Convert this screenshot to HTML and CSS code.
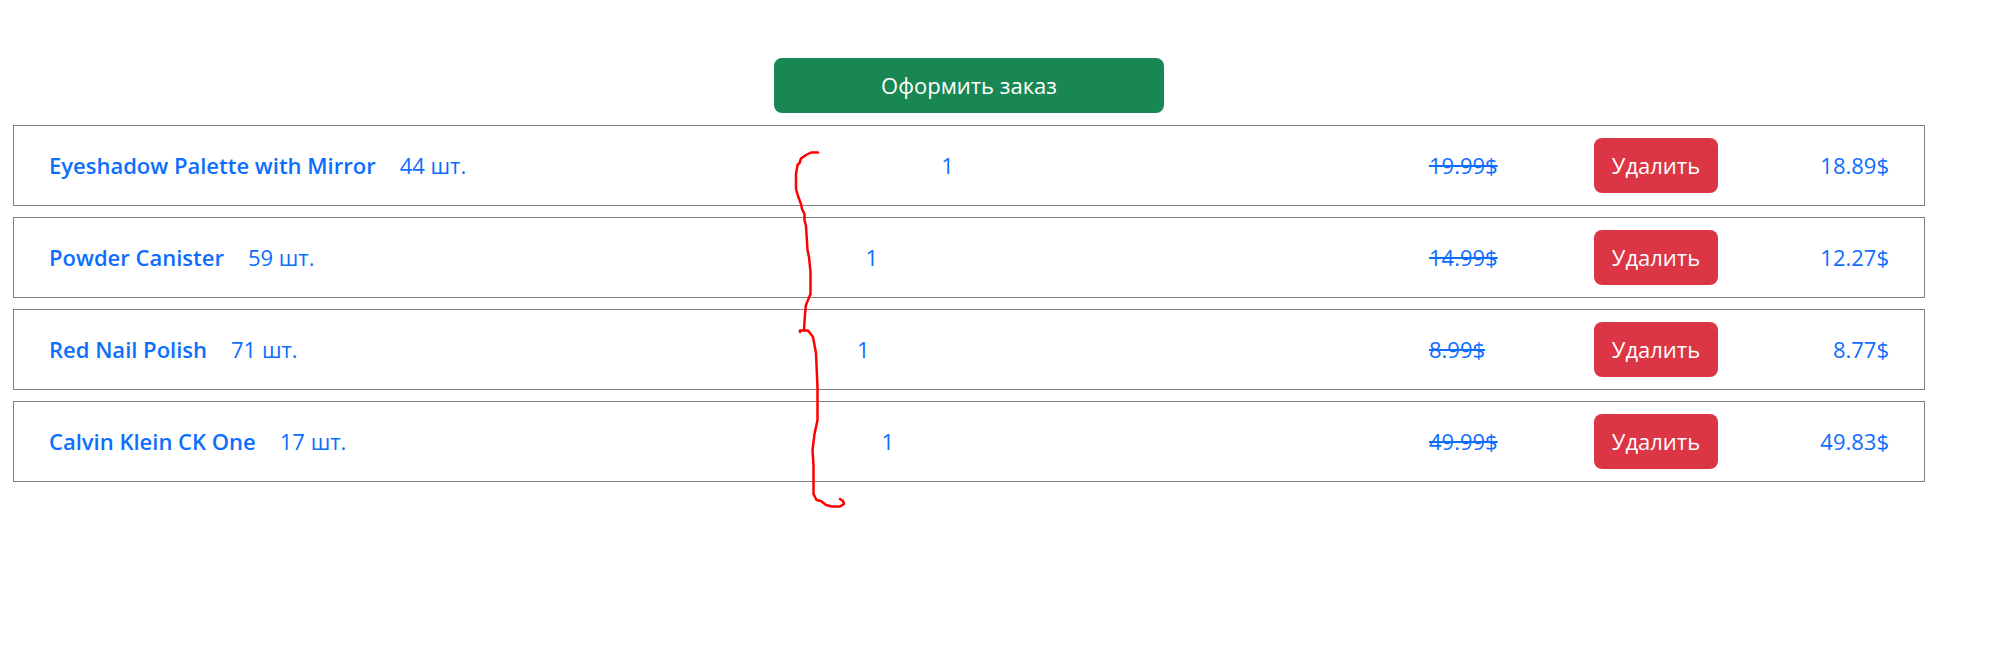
FILE: index.html
```html
<!DOCTYPE html>
<html lang="ru">
<head>
<meta charset="utf-8">
<meta name="viewport" content="width=device-width, initial-scale=1">
<title>Корзина</title>
<link rel="stylesheet" href="styles.css">
</head>
<body>
<main class="cart">
  <button class="btn btn-order" type="button">Оформить заказ</button>
  <ul class="items">
    <li class="item">
      <div class="info"><a class="name" href="#eyeshadow">Eyeshadow Palette with Mirror</a><span>44 шт.</span></div>
      <span>1</span>
      <div class="actions"><s>19.99$</s><button class="btn btn-delete" type="button">Удалить</button><span class="price">18.89$</span></div>
    </li>
    <li class="item">
      <div class="info"><a class="name" href="#powder">Powder Canister</a><span>59 шт.</span></div>
      <span>1</span>
      <div class="actions"><s>14.99$</s><button class="btn btn-delete" type="button">Удалить</button><span class="price">12.27$</span></div>
    </li>
    <li class="item">
      <div class="info"><a class="name" href="#nail-polish">Red Nail Polish</a><span>71 шт.</span></div>
      <span>1</span>
      <div class="actions"><s>8.99$</s><button class="btn btn-delete" type="button">Удалить</button><span class="price">8.77$</span></div>
    </li>
    <li class="item">
      <div class="info"><a class="name" href="#ck-one">Calvin Klein CK One</a><span>17 шт.</span></div>
      <span>1</span>
      <div class="actions"><s>49.99$</s><button class="btn btn-delete" type="button">Удалить</button><span class="price">49.83$</span></div>
    </li>
  </ul>
</main>
<svg class="brace" width="60" height="370" viewBox="790 145 60 370" aria-hidden="true">
  <path d="M818 152.500H811L806 155L801 158.500L799.500 163L797.500 165L796 174V189L798 196L801 204L802 209L804.500 214V220L806 226L807.500 250L809 257L810.500 272V294L806 305L805 314L804 330M800 332V330.500H808L813 337L816 353L817.500 388V420L814.500 434L812.500 450L813.500 465V494L816.500 500L821 501L826 505L832 506.500H840L844 504L843 501L840 499"/>
</svg>
</body>
</html>
```
FILE: styles.css
```css
* {
  box-sizing: border-box;
}

body {
  position: relative;
  min-height: 100vh;
  margin: 0;
  background: #fff;
  color: #0d6efd;
  font-family: "Segoe UI", "Open Sans", "Noto Sans", sans-serif;
  font-size: 22px;
  line-height: 33px;
}

.cart {
  display: flex;
  flex-direction: column;
  gap: 12px;
  padding: 58px 74px 0 13px;
}

.btn {
  height: 55px;
  border: 0;
  border-radius: 8px;
  color: #fff;
  font: inherit;
  cursor: pointer;
}

.btn-order {
  align-self: center;
  width: 390px;
  background: #198754;
}

.btn-delete {
  padding: 0;
  background: #dc3545;
}

.items {
  display: flex;
  flex-direction: column;
  gap: 11px;
  margin: 0;
  padding: 0;
  list-style: none;
}

.item {
  display: flex;
  align-items: center;
  justify-content: space-between;
  padding: 12px 35px;
  border: 1px solid #808080;
}

.info {
  display: flex;
  gap: 24px;
}

.name {
  color: inherit;
  font-weight: 600;
  text-decoration: none;
}

.actions {
  display: grid;
  grid-template-columns: 124px 124px 130px;
  column-gap: 41px;
  align-items: center;
}

.price {
  text-align: right;
}

.brace {
  position: absolute;
  top: 145px;
  left: 790px;
  fill: none;
  stroke: #f00;
  stroke-width: 2.500;
  stroke-linecap: round;
  stroke-linejoin: round;
  pointer-events: none;
}
```
